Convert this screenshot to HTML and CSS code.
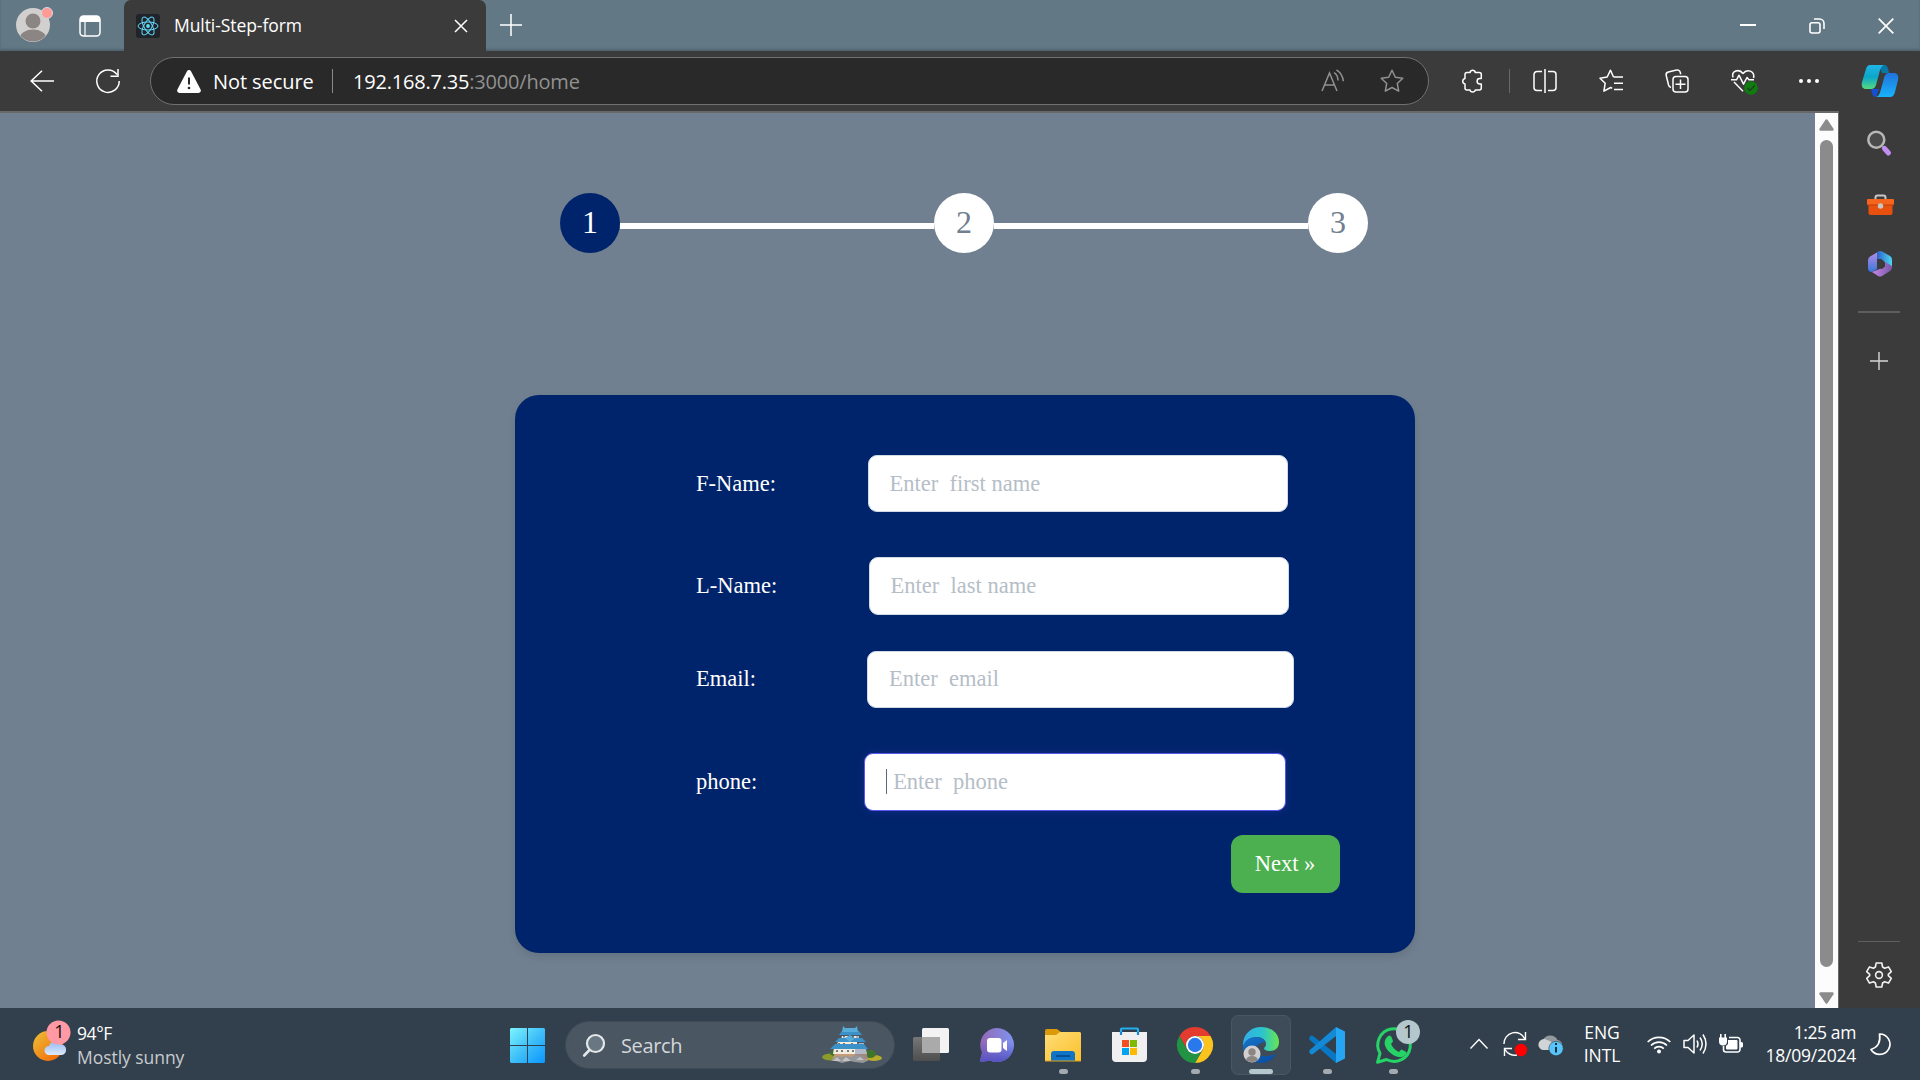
FILE: index.html
```html
<!DOCTYPE html>
<html lang="en">
<head>
<meta charset="utf-8">
<title>Multi-Step-form</title>
<link rel="stylesheet" href="styles.css">
</head>
<body>
<header class="titlebar">
  <svg class="profile" viewBox="0 0 40 46"><defs><clipPath id="pc"><circle cx="17" cy="25" r="16.5"/></clipPath></defs><circle cx="17" cy="25" r="17" fill="#d2d0ce"/><g clip-path="url(#pc)" fill="#8b8583"><circle cx="17" cy="21" r="7.5"/><ellipse cx="17" cy="38" rx="13" ry="8.5"/></g><circle cx="31" cy="13" r="5.5" fill="#ff9a94" stroke="#d5dadd"/></svg>
  <svg class="workspaces" viewBox="0 0 22 22"><rect x="1" y="1" width="20" height="20" rx="3.5" fill="none" stroke="#fff" stroke-width="1.5"/><path d="M1 7V4a3 3 0 0 1 3-3h14a3 3 0 0 1 3 3v3z" fill="#fff"/><path d="M6 7v14" stroke="#fff" stroke-width="1.2"/></svg>
  <div class="tab">
    <svg class="favicon" viewBox="0 0 24 24"><rect width="24" height="24" rx="3" fill="#20232a"/><g fill="none" stroke="#61dafb" stroke-width="1"><ellipse cx="12" cy="12" rx="10" ry="4"/><ellipse cx="12" cy="12" rx="10" ry="4" transform="rotate(60 12 12)"/><ellipse cx="12" cy="12" rx="10" ry="4" transform="rotate(120 12 12)"/></g><circle cx="12" cy="12" r="1.9" fill="#61dafb"/></svg>
    <span class="tab-title">Multi-Step-form</span>
    <svg class="tab-close" viewBox="0 0 14 14"><path d="M1 1l12 12M13 1L1 13" stroke="#fff" stroke-width="1.5"/></svg>
  </div>
  <svg class="new-tab" viewBox="0 0 22 22"><path d="M11 0v22M0 11h22" stroke="#fff" stroke-width="1.5"/></svg>
  <div class="window-controls">
    <svg viewBox="0 0 16 16"><path d="M0 7h16" stroke="#fff" stroke-width="2"/></svg>
    <svg viewBox="0 0 16 16"><rect x="1" y="4.8" width="10" height="10.2" rx="2" fill="none" stroke="#fff" stroke-width="1.6"/><path d="M5 1h5.500a4.500 4.500 0 0 1 4.500 4.500V11" fill="none" stroke="#fff" stroke-width="1.6"/></svg>
    <svg viewBox="0 0 16 16"><path d="M.7.7l14.600 14.600M15.300.7L.7 15.300" stroke="#fff" stroke-width="1.7"/></svg>
  </div>
</header>

<nav class="toolbar">
  <svg class="back" viewBox="0 0 24 22"><path d="M24 11H1M12 .8L1.200 11 12 21.200" fill="none" stroke="#fff" stroke-width="1.5"/></svg>
  <svg class="reload" viewBox="0 0 24 24"><path d="M21 5.500A11.200 11.200 0 1 0 23.200 12M22 0v7.200h-7.500" fill="none" stroke="#fff" stroke-width="1.500"/></svg>
  <div class="address">
    <svg class="warning" viewBox="0 0 24 23"><path d="M10 1.200a2.300 2.300 0 0 1 4 0l9.600 18.400a2.300 2.300 0 0 1-2 3.400H2.400a2.300 2.300 0 0 1-2-3.400z" fill="#fff"/><path d="M12 7.500v7" stroke="#292929" stroke-width="2"/><circle cx="12" cy="18" r="1.300" fill="#292929"/></svg>
    <span class="not-secure">Not secure</span>
    <i class="address-rule"></i>
    <span class="url">192.168.7.35<span class="url-path">:3000/home</span></span>
    <svg class="read-aloud" viewBox="0 0 24 24"><g fill="none" stroke="#919191" stroke-width="1.500"><path d="M1 22L8.500 4l7.500 18M3.500 16h10M13 3.500c3 2 4 4.500 4 8M15.500.8c4.500 3 6.500 7 6.800 11.500"/></g></svg>
    <svg class="star" viewBox="0 0 24 24"><path d="M12 1.200l3.300 7 7.500 1-5.500 5.300 1.400 7.700L12 18.500l-6.700 3.700 1.400-7.700L1.200 9.200l7.500-1z" fill="none" stroke="#919191" stroke-width="1.500" stroke-linejoin="round"/></svg>
  </div>
  <div class="tools">
    <svg viewBox="0 0 24 24"><path d="M5 5.500a2 2 0 0 1 2-2h3a2.700 2.700 0 0 1 5.300 0h4a2 2 0 0 1 2 2v4h-1.500a2.700 2.700 0 0 0 0 5.400h1.500v4a2 2 0 0 1-2 2h-4a2.700 2.700 0 0 1-5.300 0H7a2 2 0 0 1-2-2v-4a2.800 2.800 0 0 1 0-5.500z"/></svg>
    <i class="tools-rule"></i>
    <svg class="split" viewBox="0 0 24 24"><path d="M9 21.500H4a3 3 0 0 1-3-3v-13a3 3 0 0 1 3-3h5M15 2.500h5a3 3 0 0 1 3 3v13a3 3 0 0 1-3 3h-5M12 0v24"/></svg>
    <svg viewBox="0 0 24 24"><path d="M14.500 8L11.500 1.200 8.200 8 1 9.200l5.200 5-1.300 8 6.800-3.700 1.500.8M14.500 8H24M15 14.200h9M15 20.400h9"/></svg>
    <svg viewBox="0 0 24 24"><rect x="8" y="7.500" width="15" height="15.500" rx="3"/><path d="M15.500 10.500v9.500M10.500 15.200h10M6 18.500a3.500 3.500 0 0 1-2.500-2.700L1.200 6.500a3 3 0 0 1 2.200-3.600L11.500 1a3 3 0 0 1 3.700 2.200l.5 2"/></svg>
    <svg class="health" viewBox="0 0 26 26"><path d="M2 9.500C0 3 8 .2 12 5.500 16 .2 24.200 3 22.500 10M3 14l9 9.200M0 11.800h5.500l2.500-4.600 4.500 9 3.500-6.700 2 2.300h5"/><circle cx="20" cy="20" r="6.800" fill="#107c10" stroke="none"/><path d="M16.500 20l2.300 2.500 5-5" stroke="#243c24"/></svg>
    <svg class="more" viewBox="0 0 24 24"><g fill="#fff" stroke="none"><circle cx="4" cy="12" r="2"/><circle cx="12" cy="12" r="2"/><circle cx="20" cy="12" r="2"/></g></svg>
  </div>
  <svg class="copilot" viewBox="0 0 36 32"><defs><linearGradient id="c1" x2="0" y2="1"><stop stop-color="#1fb6e6"/><stop offset=".5" stop-color="#0ca6c9"/><stop offset="1" stop-color="#56dc7d"/></linearGradient><linearGradient id="c2" x2="0" y2="1"><stop stop-color="#2272dc"/><stop offset="1" stop-color="#17b4fb"/></linearGradient></defs><path d="M17 0h5c3 0 4 2 5 8h-7z" fill="#0878a8"/><path d="M9 24h8l-3 8c-3 0-4-3-5-8z" fill="#174ed2"/><path d="M8 0h14c-3 1-4 5-5 9l-3 11c-1 3-3 4-5 4H4c-3 0-5-2-4-7L4 4c1-3 2-4 4-4z" fill="url(#c1)"/><path d="M27 8h5c3 0 5 2 4 7l-3 12c-1 4-3 5-5 5H14c3-1 4-4 5-8l3-11c1-4 3-5 5-5z" fill="url(#c2)"/></svg>
</nav>

<div class="workspace">
  <main class="page">
    <ol class="steps">
      <li class="step step-active">1</li>
      <li class="step-line"></li>
      <li class="step">2</li>
      <li class="step-line"></li>
      <li class="step">3</li>
    </ol>
    <form class="card">
      <div class="field first"><label for="fname">F-Name:</label><input id="fname" placeholder="Enter  first name"></div>
      <div class="field last"><label for="lname">L-Name:</label><input id="lname" placeholder="Enter  last name"></div>
      <div class="field email"><label for="email">Email:</label><input id="email" placeholder="Enter  email"></div>
      <div class="field phone"><label for="phone">phone:</label><div class="phone-box"><input id="phone" placeholder=" Enter  phone"><i class="caret"></i></div></div>
      <button class="next" type="button">Next »</button>
    </form>
  </main>
  <div class="scrollbar">
    <svg viewBox="0 0 15 12"><path d="M6.500.8q1-1 2 0l6 9q.8 2-1 2h-12q-1.800 0-1-2z" fill="#8b8b8b"/></svg>
    <div class="thumb"></div>
    <svg viewBox="0 0 15 12"><path d="M6.500 11.200q1 1 2 0l6-9q.8-2-1-2h-12q-1.800 0-1 2z" fill="#8b8b8b"/></svg>
  </div>
  <aside class="sidebar">
    <svg class="side-search" viewBox="0 0 24 26"><circle cx="9.300" cy="9.800" r="8" fill="#4b4b4b" stroke="#b9b7b5" stroke-width="2.500"/><path d="M15 16l2.500 2.500" stroke="#999" stroke-width="2"/><path d="M17.500 18.500l4 4.500" stroke="#c38cf0" stroke-width="5" stroke-linecap="round"/></svg>
    <svg class="side-tools" viewBox="0 0 27 21"><path d="M8.500 6V3.500a2 2 0 0 1 2-2h6a2 2 0 0 1 2 2V6" fill="none" stroke="#c9c7c5" stroke-width="2"/><path d="M1.500 9h24v10a2 2 0 0 1-2 2h-20a2 2 0 0 1-2-2z" fill="#e8500f"/><path d="M1 5h25a1 1 0 0 1 1 1v4a1 1 0 0 1-1 1H1a1 1 0 0 1-1-1V6a1 1 0 0 1 1-1z" fill="#f5651d"/><path d="M0 11h27" stroke="#bb3d08"/><circle cx="13.500" cy="12" r="2.700" fill="#c9c7c5"/></svg>
    <svg class="side-office" viewBox="0 0 24 26"><defs><linearGradient id="o1" x2="0" y2="1"><stop stop-color="#b98be5"/><stop offset="1" stop-color="#3778dc"/></linearGradient><linearGradient id="o2"><stop stop-color="#2b62c9"/><stop offset="1" stop-color="#4fd6f2"/></linearGradient><linearGradient id="o3"><stop stop-color="#c586e8"/><stop offset="1" stop-color="#7a57a5"/></linearGradient></defs><path d="M9 1.500L2 5.500Q0 7 0 9v8q0 4 4 4l5-3V1z" fill="url(#o1)"/><path d="M9 1q3-2 6 0l7 4q2 1 2 4v8l-7-5-4-4H9z" fill="url(#o2)"/><path d="M24 15q0 4-2 5l-8 5q-2 1-4 0l-6-4 10-4 3-2v-4z" fill="url(#o3)"/><path d="M10 9.500L14 8.500l3 3v4l-3 2.500-5-1.500v-5z" fill="#3b3b3b"/></svg>
    <i class="side-rule"></i>
    <svg class="side-add" viewBox="0 0 18 18"><path d="M9 0v18M0 9h18" stroke="#d6d6d6" stroke-width="1.400"/></svg>
    <i class="side-rule side-rule-low"></i>
    <svg class="side-gear" viewBox="0 0 26 26"><g fill="none" stroke="#f2f2f2" stroke-width="1.600" stroke-linejoin="round"><path d="M10.200 1h5.600l.8 4 2 1.200 3.900-1.300 2.800 4.800-3 2.700v1.200l3 2.700-2.800 4.800-3.900-1.300-2 1.200-.8 4h-5.600l-.8-4-2-1.200-3.900 1.300L.7 16.300l3-2.700v-1.200l-3-2.700 2.800-4.800 3.900 1.300 2-1.200z"/><circle cx="13" cy="13" r="3.400"/></g></svg>
  </aside>
</div>

<footer class="taskbar">
  <div class="weather">
    <svg viewBox="0 0 40 46"><defs><linearGradient id="w1" x2="1" y2="1"><stop stop-color="#ecc13a"/><stop offset="1" stop-color="#f56000"/></linearGradient><linearGradient id="w2" x2="0" y2="1"><stop stop-color="#95b9f2"/><stop offset="1" stop-color="#dceafb"/></linearGradient></defs><circle cx="15" cy="27" r="15" fill="url(#w1)"/><path d="M16 36a4.500 4.500 0 0 1 0-9 7 7 0 0 1 12.500-1.500 5.300 5.300 0 0 1 0 10.500z" fill="url(#w2)"/><circle cx="25.500" cy="13.500" r="12" fill="#ff99a4"/><text class="badge-text" x="26.500" y="19" text-anchor="middle">1</text></svg>
    <div class="weather-text"><span class="temp">94°F</span><span class="sky">Mostly sunny</span></div>
  </div>
  <div class="apps">
    <div class="slot"><svg class="start" viewBox="0 0 35 35"><defs><linearGradient id="s1" gradientUnits="userSpaceOnUse" x1="0" y1="0" x2="35" y2="35"><stop stop-color="#7df5ff"/><stop offset=".5" stop-color="#40c0f8"/><stop offset="1" stop-color="#0a96ff"/></linearGradient></defs><path fill="url(#s1)" d="M1 0h16v17H0V1zM18 0h16l1 1v16H18zM0 18h17v17H1l-1-1zM18 18h17v16l-1 1H18z"/></svg></div>
    <div class="search">
      <svg class="search-icon" viewBox="0 0 22 23"><circle cx="12.500" cy="9.500" r="8.500" fill="#687782" stroke="#e4e8ea" stroke-width="2.200"/><path d="M6.500 16L1.200 21.500" stroke="#e4e8ea" stroke-width="2.600" stroke-linecap="round"/></svg>
      <span>Search</span>
      <svg class="castle" viewBox="0 0 60 38"><ellipse cx="9" cy="31" rx="9" ry="3.500" fill="#8b9b2c"/><ellipse cx="13" cy="27" rx="5" ry="3" fill="#3e7229"/><ellipse cx="52" cy="32" rx="8" ry="3" fill="#b5aa2e"/><ellipse cx="48" cy="28" rx="6" ry="4" fill="#3f7529"/><path d="M13 26h31l2 9H10z" fill="#c39b78"/><path d="M33 26h11l2 7H33z" fill="#a08a80"/><path d="M12 22h21v6H11zM16 16h19v5H14zM20 10h15v4H19z" fill="#f5ecdc"/><path d="M33 23h11l1 5H33zM35 17h7v3h-7zM34 10h3v4h-3z" fill="#b2b8c8"/><path d="M20 5h17l3 4H17zM17 12h23l4 4H13zM13 18h29l4 5H8z" fill="#3a92c8"/><path d="M21 0l2 2h10l2-2 1 6H20zM23 12l5-3 5 3-5 4z" fill="#57acd9"/><path d="M22 10v1.500M31 10v1.500M17 17v1M22 17v1M30 17v1M36 17v1M15 24v2M20 24v2M26 24v2M31 24v2" stroke="#435773" stroke-width="1.500"/><path d="M9 35l5-5 6 1 4-1 5 1 4-2 7 1 5 5-4 2-8-1-5-1-8 2-6-2z" fill="#96979a"/><path d="M11 35l4-4 4 4M20 35l4-4 5 4M34 34l4-3 4 3" fill="#c4c3c1"/></svg>
    </div>
    <div class="slot"><svg class="task-view" viewBox="0 0 36 34"><defs><linearGradient id="v1" x2="0" y2="1"><stop stop-color="#777"/><stop offset="1" stop-color="#4e4e4e"/></linearGradient></defs><rect y="9" width="27" height="24" rx="1.500" fill="url(#v1)"/><rect x="9" width="27" height="25" rx="1.500" fill="#f3f3f3"/><path d="M9 9h18v16H9z" fill="#aaa"/></svg></div>
    <div class="slot"><svg class="chat" viewBox="0 0 34 34"><defs><linearGradient id="t1" x1="0" y1=".2" x2="1" y2=".2"><stop stop-color="#9568b5"/><stop offset="1" stop-color="#7d94f0"/></linearGradient><linearGradient id="t2" x2="0" y2="1"><stop offset=".4" stop-color="#5a55c4" stop-opacity="0"/><stop offset="1" stop-color="#5452c4"/></linearGradient></defs><path d="M17 0a17 17 0 1 1-7 32.500L1.500 34Q0 34 0 32.500l2-8A17 17 0 0 1 17 0z" fill="url(#t1)"/><path d="M17 0a17 17 0 1 1-7 32.500L1.500 34Q0 34 0 32.500l2-8A17 17 0 0 1 17 0z" fill="url(#t2)"/><rect x="7" y="10" width="14.500" height="14.500" rx="3" fill="#fff"/><path d="M23 15l4-3v11l-4-3z" fill="#fff"/></svg></div>
    <div class="slot"><svg class="files" viewBox="0 0 36 33"><defs><linearGradient id="f1" x2="1" y2="1"><stop stop-color="#ffdd77"/><stop offset="1" stop-color="#fbc02b"/></linearGradient></defs><path d="M0 2q0-2 2-2h10l4 3v6H0z" fill="#dc9a08"/><path d="M0 6h11l4-3h20l1 1v28H0z" fill="url(#f1)"/><path d="M6 32V25a3 3 0 0 1 3-3h18a3 3 0 0 1 3 3v7z" fill="#0f74c8"/><path d="M11 27h14" stroke="#074f91" stroke-width="2"/><path d="M0 32h36" stroke="#e0a21a"/></svg><i class="running"></i></div>
    <div class="slot"><svg class="store" viewBox="0 0 35 36"><path d="M9 8V2.500q0-1 1-1h15q1 0 1 1V8" fill="none" stroke="#22b0f0" stroke-width="2.200"/><path d="M0 5h35v26a4 4 0 0 1-4 4H4a4 4 0 0 1-4-4z" fill="#f0f0f0"/><path d="M9 5v3M26 5v3" stroke="#1789d4" stroke-width="2.200"/><path d="M10 13h7v7h-7z" fill="#f25022"/><path d="M18 13h7v7h-7z" fill="#7fba00"/><path d="M10 21h7v7h-7z" fill="#00a4ef"/><path d="M18 21h7v7h-7z" fill="#ffb900"/></svg></div>
    <div class="slot"><svg class="chrome" viewBox="0 0 36 36"><path d="M2.400 9A18 18 0 0 1 33.600 9H18a9 9 0 0 0-7.800 13.500z" fill="#e33b2e"/><path d="M33.600 9A18 18 0 0 1 18 36l7.800-13.500A9 9 0 0 0 18 9z" fill="#fcc31e"/><path d="M18 36A18 18 0 0 1 2.400 9l7.800 13.500A9 9 0 0 0 25.800 22.500z" fill="#229342"/><circle cx="18" cy="18" r="9" fill="#fff"/><circle cx="18" cy="18" r="7.200" fill="#2979ed"/></svg><i class="running"></i></div>
    <div class="slot"><div class="active-tile"><svg class="edge" viewBox="0 0 36 36"><defs><linearGradient id="e1"><stop stop-color="#31aee8"/><stop offset=".55" stop-color="#2cc5cd"/><stop offset="1" stop-color="#69e64d"/></linearGradient><linearGradient id="e2" x2=".7" y2="1"><stop stop-color="#1474c9"/><stop offset="1" stop-color="#0b50a4"/></linearGradient></defs><path d="M0 18C0 7 8 0 18 0c11 0 18 7 18 15 0 6-4 9-9 9-4 0-6-1-6-3 1-1 2-2 2-4 0-4-4-7-9-7C8 10 3 14 0 20z" fill="url(#e1)"/><path d="M0 19C2 13 7 10 13 10c5 0 9 3 9 6-3-2-9 1-9 7 0 6 8 8 20 4-3 6-9 9-15 9C8 36 0 29 0 19z" fill="url(#e2)"/><circle cx="9" cy="27" r="8.500" fill="#d2d0ce"/><circle cx="9" cy="25" r="3.700" fill="#8b8583"/><path d="M3 33q1-4 6-4t6 4q-6 4-12 0z" fill="#8b8583"/></svg></div><i class="running wide"></i></div>
    <div class="slot"><svg class="code" viewBox="0 0 36 36"><path d="M1 9.500q1.500-1.500 3-.5L27 27v9L.8 13q-1.500-1.500.2-3.500z" fill="#0878c4"/><path d="M1 26.500q1.500 1.500 3 .5L27 9V0L.8 23q-1.500 1.500.2 3.500z" fill="#1489d6"/><path d="M27 0l9 4.500v27L27 36z" fill="#26a6f2"/></svg><i class="running"></i></div>
    <div class="slot"><svg class="whatsapp" viewBox="0 0 45 44"><path d="M1.500 42.300l2.500-9A16.300 16.300 0 1 1 10.500 39.500z" fill="none" stroke="#25d366" stroke-width="3" stroke-linejoin="round"/><path d="M11 17q3-3 4.500 0l1.500 4q0 1-2 3 3 6 8 8l2.300-2.500q1 0 5 2.500 1 2-3 4.500c-4 2-10-.5-14-4.500-4-4-7-10-2.300-15z" fill="#25d366"/><circle cx="32" cy="12" r="12" fill="#b3c7cd"/><text class="badge-text" x="32.500" y="18" text-anchor="middle">1</text></svg><i class="running"></i></div>
  </div>
  <div class="tray">
    <svg class="chevron" viewBox="0 0 18 12"><path d="M.5 10.500L9 1.500l8.500 9" fill="none" stroke="#fff" stroke-width="1.400"/></svg>
    <svg class="sync" viewBox="0 0 24 24"><g fill="none" stroke="#fff" stroke-width="1.400"><path d="M1 12A11 11 0 0 1 22 7M22.500 0v7.500H15M14 23A11 11 0 0 1 2 17.500M1.500 24v-7.500H9"/></g><circle cx="18" cy="18" r="6.200" fill="#f00"/></svg>
    <svg class="cloud" viewBox="0 0 24 24"><path d="M6 18A5.500 5.500 0 0 1 4 8 8 8 0 0 1 18.500 8 5 5 0 0 1 18 18z" fill="#929a9f"/><path d="M5.500 18A5.500 5.500 0 1 1 8 8q5 1 7 6l-2 4z" fill="#d0d4d6"/><circle cx="17" cy="16.500" r="7.200" fill="#57c5fa" stroke="#323f4c" stroke-width=".6"/><path d="M17 15v5.500M17 11v2" stroke="#173245" stroke-width="2"/></svg>
    <div class="language"><span>ENG</span><span>INTL</span></div>
    <svg class="wifi" viewBox="0 0 24 20"><g fill="none" stroke="#fff" stroke-width="1.700"><path d="M.7 8a16 16 0 0 1 22.600 0M4 11.500a11.300 11.300 0 0 1 16 0M7.200 14.700a6.800 6.800 0 0 1 9.600 0"/></g><circle cx="12" cy="17.500" r="2" fill="#fff"/></svg>
    <svg class="sound" viewBox="0 0 24 22"><path d="M1 7.500h4L11 2v18l-6-5.500H1zM14 7.500q2 3.500 0 7M17 4.500q4.500 6.500 0 13M20 1.500q6 9.500 0 19" fill="none" stroke="#fff" stroke-width="1.500" stroke-linejoin="round"/></svg>
    <svg class="battery" viewBox="0 0 24 20"><path d="M10 3.500h8.500a2.500 2.500 0 0 1 2.500 2.500v9.500a2.500 2.500 0 0 1-2.500 2.500H7a2.500 2.500 0 0 1-2.500-2.500V12" fill="none" stroke="#fff" stroke-width="1.600"/><path d="M9 6h8.500q1 0 1 1v7.500q0 1-1 1H8q-1 0-1-1V12l2-2zM21 8h1.500a1.500 1.500 0 0 1 1.500 1.500v2.500a1.500 1.500 0 0 1-1.500 1.500H21zM0 3.500h8v4a4 4 0 0 1-8 0zM1 0h1.600v4H1zM5.400 0H7v4H5.400z" fill="#fff"/></svg>
    <div class="clock"><span class="time">1:25 am</span><span class="date">18/09/2024</span></div>
    <svg class="moon" viewBox="0 0 20 22"><path d="M9.500 1A10.200 10.200 0 1 1 1 16.500Q11.500 13 9.500 1z" fill="none" stroke="#fff" stroke-width="1.700" stroke-linejoin="round"/></svg>
  </div>
</footer>
</body>
</html>
```

FILE: styles.css
```css
* { box-sizing: border-box; }
body {
  margin: 0;
  width: 1920px;
  height: 1080px;
  overflow: hidden;
  display: grid;
  grid-template-rows: 51px 60px 897px 72px;
  background: #323f4c;
  color: #fff;
  font-family: "Open Sans", "Noto Sans", sans-serif;
}
svg { display: block; flex: none; overflow: visible; }

/* Title bar */
.titlebar { display: flex; align-items: center; background: #627884; box-shadow: inset 0 -2px 2px #506570; }
.profile { width: 40px; height: 46px; margin-left: 16px; align-self: flex-start; }
.workspaces { width: 22px; height: 22px; margin-left: 23px; }
.tab {
  display: flex; align-items: center;
  width: 362px; height: 51px; margin-left: 23px; padding: 0 18px 0 12px;
  background: #3b3b3b; border-radius: 7px 7px 0 0;
}
.favicon { width: 24px; height: 24px; }
.tab-title { margin: -1px 0 0 14px; font-size: 17.5px; letter-spacing: -.07px; }
.tab-close { width: 14px; height: 14px; margin-left: auto; }
.new-tab { width: 22px; height: 22px; margin-left: 14px; margin-top: -2px; }
.window-controls { display: flex; gap: 53px; margin-left: auto; padding-right: 26px; }
.window-controls svg { width: 16px; height: 16px; }

/* Toolbar */
.toolbar { display: flex; align-items: center; background: #3b3b3b; }
.back { width: 24px; height: 22px; margin-left: 30px; }
.reload { width: 24px; height: 24px; margin-left: 42px; }
.address {
  display: flex; align-items: center;
  width: 1279px; height: 48px; margin-left: 30px; padding: 0 24px 0 26px;
  border: 1px solid #707070; border-radius: 24px; background: #292929;
  font-size: 20px;
}
.warning { width: 24px; height: 23px; }
.not-secure { margin-left: 12px; width: 119px; white-space: nowrap; letter-spacing: -.08px; }
.address-rule { width: 1px; height: 24px; background: #8a8a8a; }
.url { margin-left: 20px; letter-spacing: -.2px; }
.url-path { color: #919191; }
.read-aloud { width: 24px; height: 24px; margin-left: auto; }
.star { width: 24px; height: 24px; margin-left: 35px; }
.tools { display: flex; align-items: center; margin-left: 31px; }
.tools svg { width: 24px; height: 24px; margin-left: 42px; fill: none; stroke: #fff; stroke-width: 1.5; stroke-linejoin: round; }
.tools svg:first-child { margin-left: 0; }
.tools .split { margin-left: 23px; }
.tools .health { width: 26px; height: 26px; }
.tools .more { margin-left: 40px; }
.tools-rule { width: 1px; height: 24px; margin-left: 25px; background: #686868; }
.copilot { width: 36px; height: 32px; margin-left: 41px; }

/* Browser body */
.workspace { display: grid; grid-template-columns: 1815px 24px 81px; }
.page {
  display: flex; flex-direction: column; align-items: center;
  padding: 80px 0 0 115px; background: #708090; border-top: 2px solid #686868;
  font-family: "Liberation Serif", serif; font-size: 22.5px;
}
.steps { display: flex; align-items: center; width: 808px; margin: 0 0 0 -2px; padding: 0; list-style: none; }
.step {
  width: 60px; height: 60px; border-radius: 50%;
  background: #fff; color: #708090;
  font-size: 32px; line-height: 58px; text-align: center;
}
.step-active { background: #00246b; color: #fff; }
.step-line { flex: 1; height: 6px; margin-top: 6px; background: #fff; }
.card {
  display: flex; flex-direction: column;
  width: 900px; height: 558px; margin-top: 142px; padding: 60px 75px 60px 181px;
  border-radius: 24px; background: #00246b; box-shadow: 0 4px 8px rgba(0, 0, 0, .1);
}
.field { display: flex; align-items: center; height: 57px; }
.field label { flex: none; }
.field input {
  height: 100%; padding: 0 20px 0 20.6px; border: 1px solid #d1d9e6; border-radius: 9px; outline: 0;
  background: #fff; color: #333; font: inherit;
}
.field input::placeholder { color: #b5bec7; opacity: 1; }
.first label { width: 172px; }
.first input, .last input { width: 420px; }
.last { height: 58px; margin-top: 45px; }
.last label { width: 173px; }
.email { margin-top: 36px; }
.email label { width: 171px; margin-top: -2px; }
.email input { width: 427px; padding: 0 21px 2px; }
.phone { height: 58px; margin-top: 45px; }
.phone label { width: 168px; }
.phone-box { position: relative; height: 58px; }
.phone-box input { width: 422px; padding-left: 22.5px; border-color: #5858f0; box-shadow: 0 0 8px rgba(67, 56, 202, .3); }
.caret { position: absolute; left: 22px; top: 16px; width: 1px; height: 25px; background: #5b6b7d; }
.next {
  align-self: flex-end; width: 109px; height: 58px; margin-top: 24px; padding: 0 1px 0 0;
  border: 0; border-radius: 12px; background: #4caf50; color: #fff; font: inherit;
}
.scrollbar {
  display: flex; flex-direction: column; align-items: center;
  padding: 6px 0 4px; background: #fcfcfc; border-top: 2px solid #686868; border-right: 1px solid #686868;
}
.scrollbar svg { width: 15px; height: 12px; }
.thumb { flex: 1; width: 13px; margin: 9px 0 25px; border-radius: 7px; background: #8b8b8b; }
.sidebar { display: flex; flex-direction: column; align-items: center; padding: 19px 1px 0 0; background: #3b3b3b; }
.side-search { width: 24px; height: 26px; }
.side-tools { width: 27px; height: 21px; margin: 38px 0 0 2px; }
.side-office { width: 24px; height: 26px; margin: 36px 0 0 2px; }
.side-rule { width: 42px; height: 2px; margin-top: 34px; background: #5e5e5e; }
.side-add { width: 18px; height: 18px; margin-top: 39px; }
.side-rule-low { height: 1px; margin-top: 571px; }
.side-gear { width: 26px; height: 26px; margin-top: 20px; }

/* Taskbar */
.taskbar { display: grid; grid-template-columns: 494px 932px 494px; background: #323f4c; }
.weather { display: flex; align-items: center; padding: 2px 0 0 33px; }
.weather svg { width: 40px; height: 46px; margin-top: -6px; }
.weather-text { display: flex; flex-direction: column; margin-left: 4px; font-size: 17.5px; line-height: 24px; }
.temp { letter-spacing: -.4px; }
.sky { color: #c8cccf; letter-spacing: -.05px; }
.badge-text { font: 18px "Open Sans", sans-serif; fill: #111; }
.apps { display: flex; align-items: center; }
.slot { position: relative; flex: none; display: flex; align-items: center; justify-content: center; width: 66px; height: 72px; padding-top: 2px; }
.search {
  flex: none; display: flex; align-items: center; width: 330px; height: 48px; margin: 2px 3px 0 5px; padding: 0 12px 0 17px;
  border: 1px solid #3f4c58; border-radius: 24px; background: #4a5661; color: #d3d7da; font-size: 20px;
}
.search-icon { width: 22px; height: 23px; }
.search span { margin-left: 16px; letter-spacing: -.35px; }
.castle { width: 60px; height: 38px; margin-left: auto; }
.start { width: 35px; height: 35px; }
.task-view { width: 36px; height: 34px; }
.chat { width: 34px; height: 34px; }
.files { width: 36px; height: 33px; }
.store { width: 35px; height: 36px; }
.chrome, .edge, .code { width: 36px; height: 36px; }
.whatsapp { width: 45px; height: 44px; margin: -7px 0 0 10px; }
.active-tile { display: flex; align-items: center; justify-content: center; width: 60px; height: 60px; border: 1px solid #495663; border-radius: 7px; background: #3e4b58; }
.running { position: absolute; left: 29px; bottom: 6px; width: 9px; height: 5px; border-radius: 3px; background: #a4abb0; }
.wide { left: 21px; width: 24px; background: #b3c7cd; }
.tray { display: flex; align-items: center; padding-left: 44px; font-size: 17.5px; line-height: 23px; }
.chevron { width: 18px; height: 12px; }
.sync { width: 24px; height: 24px; margin-left: 15px; }
.cloud { width: 24px; height: 24px; margin-left: 12px; }
.language { display: flex; flex-direction: column; align-items: center; width: 36px; margin-left: 21px; letter-spacing: -.1px; }
.wifi { width: 24px; height: 20px; margin-left: 27px; }
.sound { width: 24px; height: 22px; margin-left: 12px; }
.battery { width: 24px; height: 20px; margin-left: 12px; }
.clock { display: flex; flex-direction: column; align-items: flex-end; width: 113px; letter-spacing: -.25px; }
.time { letter-spacing: -.4px; }
.moon { width: 20px; height: 22px; margin-left: 14px; }
```
